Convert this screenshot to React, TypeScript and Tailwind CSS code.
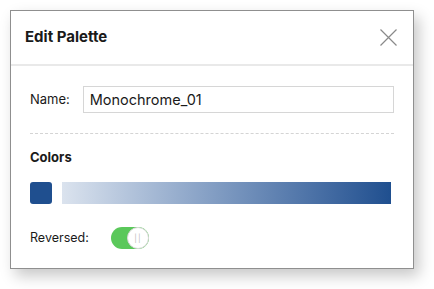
export default function App() {
  return (
    <div className="h-[289px] w-[434px] bg-white pl-[10px] pt-[10px] font-['Inter',sans-serif] text-[#1a1a1a]">
      <div className="flex h-[259px] w-[404px] flex-col border border-[#8f8f8f] bg-white shadow-[5px_7px_14px_rgba(0,0,0,0.22)]">
        <div className="flex h-[55px] items-center justify-between border-b-2 border-[#e9e9e9] pl-[14px] pr-[16px]">
          <h1 className="text-[15px] font-bold">Edit Palette</h1>
          <svg width="17" height="17" viewBox="0 0 17 17" className="text-[#8a8a8a]">
            <path d="M0.5 0.5 L16.5 16.5 M16.5 0.5 L0.5 16.5" stroke="currentColor" strokeWidth="1.2" />
          </svg>
        </div>
        <div className="flex flex-col px-[19px] pt-[20px]">
          <div className="flex items-center">
            <span className="w-[53px] text-[13px]">Name:</span>
            <div className="flex h-[27px] w-[313px] items-center border border-[#d6d6d6] px-[6px] text-[14.5px]">
              Monochrome_01
            </div>
          </div>
          <div className="mt-[20px] border-t border-dashed border-[#d4d4d4]" />
          <h2 className="mt-[15px] text-[13px] font-bold leading-[16px]">Colors</h2>
          <div className="mt-[17px] flex items-center gap-[10px]">
            <div className="h-[22px] w-[22px] rounded-[3px] bg-[#1f4f8f]" />
            <div className="h-[22px] w-[329px] bg-gradient-to-r from-[#dbe3ee] to-[#1f4f8f]" />
          </div>
          <div className="mt-[23px] flex items-center">
            <span className="w-[81px] text-[12.5px]">Reversed:</span>
            <div className="relative h-[22px] w-[38px] rounded-full bg-[#5ac85a]">
              <div className="absolute right-0 top-0 flex h-[22px] w-[22px] items-center justify-center rounded-full border border-[#d9d9d9] bg-white">
                <span className="text-[8px] leading-none tracking-[1px] text-[#bdbdbd]">||</span>
              </div>
            </div>
          </div>
        </div>
      </div>
    </div>
  );
}
